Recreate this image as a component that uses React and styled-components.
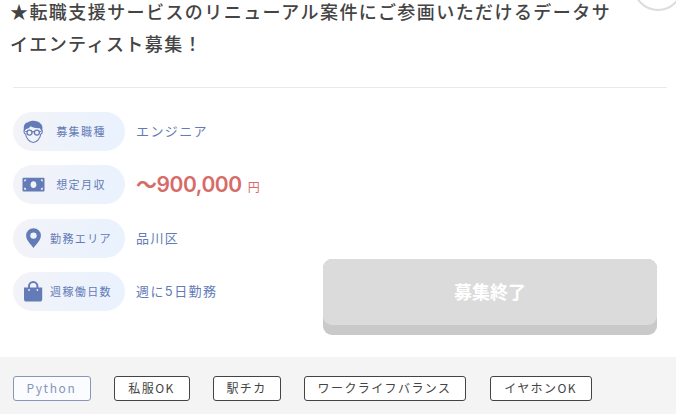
import React from "react";
import styled, { createGlobalStyle } from "styled-components";

const GlobalStyle = createGlobalStyle`
  * {
    box-sizing: border-box;
  }

  body {
    margin: 0;
    background-color: #fff;
    color: #444;
    font-family: "Noto Sans CJK JP", sans-serif;
    overflow: hidden;
  }
`;

// Job card, cut off at the bottom of the viewport
const Card = styled.article`
  position: relative;
  display: flex;
  flex-direction: column;
  width: 676px;
  height: 414px;
  overflow: hidden;
`;

// Round keep button that hangs over the top right corner
const KeepButton = styled.button`
  position: absolute;
  top: -39px;
  right: -7px;
  width: 50px;
  height: 50px;
  padding: 0;
  border: 2px solid #dcdcdc;
  border-radius: 50%;
  background-color: #fff;
`;

const Header = styled.header`
  height: 88px;
  margin: 0 9px 0 13px;
  border-bottom: 1px solid #e8e8e8;
`;

const Title = styled.h2`
  width: 612px;
  margin: -5px 0 0 -3px;
  font-size: 18px;
  font-weight: 500;
  line-height: 32px;
  letter-spacing: 1.43px;
`;

const Body = styled.div`
  display: flex;
  justify-content: space-between;
  align-items: flex-end;
  height: 269px;
  padding: 24px 19px 22px 13px;
`;

const Details = styled.dl`
  display: grid;
  grid-template-rows: repeat(4, 39px);
  row-gap: 14.4px;
  align-self: flex-start;
  margin: 0;
`;

const DetailRow = styled.div`
  display: flex;
  align-items: center;
`;

const Label = styled.dt`
  display: flex;
  align-items: center;
  width: 112px;
  height: 39px;
  padding: 0 10px 0 8px;
  border-radius: 20px;
  background: linear-gradient(100deg, #f3f3f8, #e9f2fe);
  color: #637bb7;
  font-size: 11px;
  letter-spacing: 1.4px;

  svg {
    flex: none;
    width: 24px;
    height: 24px;
  }

  span {
    flex: 1;
    display: flex;
    justify-content: center;
    padding: 0 0 1px 2px;
    white-space: nowrap;
  }
`;

const Value = styled.dd`
  margin: 0 0 1px 11px;
  color: #637bb7;
  font-size: 13px;
  line-height: 20px;
  letter-spacing: 1.4px;

  b {
    font-family: Inter, sans-serif;
    font-weight: 400;
  }
`;

const Price = styled.dd`
  display: flex;
  align-items: baseline;
  margin: 4px 0 0 11px;
  color: #d76b67;
  font-family: Inter, "Noto Sans CJK JP", sans-serif;
  font-size: 21px;
  font-weight: 600;
  line-height: 28px;
  letter-spacing: -0.45px;

  small {
    margin-left: 6px;
    font-size: 12px;
    font-weight: 400;
  }
`;

const ClosedButton = styled.button`
  width: 334px;
  height: 76px;
  padding: 0;
  border: 0;
  border-bottom: 10px solid #c9c9c9;
  border-radius: 9px;
  background-color: #c9c9c9;
  font: inherit;

  span {
    display: flex;
    align-items: center;
    justify-content: center;
    height: 66px;
    padding-bottom: 2px;
    border-radius: 9px;
    background-color: #dbdbdb;
    color: #fff;
    font-size: 18px;
    font-weight: 700;
  }
`;

const Tags = styled.ul`
  display: flex;
  flex: 1;
  align-items: flex-start;
  gap: 23px;
  margin: 0;
  padding: 19px 13px 0;
  background-color: #f4f4f4;
  list-style: none;
`;

const Tag = styled.li`
  flex: none;
  width: ${(props) => props.$width}px;
  height: 25px;
  padding-right: 1px;
  border: 1px solid ${(props) => (props.$skill ? "#8796b9" : "#444")};
  border-radius: 3px;
  background-color: ${(props) => (props.$skill ? "#fafcff" : "#fff")};
  color: ${(props) => (props.$skill ? "#8796b9" : "#444")};
  font-size: 12px;
  line-height: 21px;
  letter-spacing: ${(props) => (props.$skill ? 1.6 : 1.4)}px;
  text-align: center;
  white-space: nowrap;

  &:last-child {
    margin-left: 1px;
  }
`;

const PersonIcon = () => (
  <svg viewBox="0 0 24 24" fill="none" stroke="currentColor" aria-hidden="true">
    <path
      d="M3.2 11.5C1.800 6 3.600 2.600 7.200 2.200 10-.2 16.900.3 19.500 3.400c2.400 1.900 2.200 5.400 1.300 8.100l-1.900-3.300c-3.800.2-7.200-.5-9.400-1.900-.9 1.700-2.700 2.500-4.500 2.700z"
      fill="currentColor"
      stroke="none"
    />
    <path
      d="M4 9.500c-1.700.3-1.200 4.200.6 4.500.4 4.200 4.200 8.500 7.600 8.500s7.200-4.300 7.600-8.500c1.800-.3 2.100-4.200.4-4.500"
      strokeWidth="1.1"
    />
    <circle cx="8.5" cy="12.6" r="2.5" strokeWidth="1.3" />
    <circle cx="15.9" cy="12.6" r="2.5" strokeWidth="1.3" />
    <path d="M4.3 11.5h2M11 12.1q1.200-.8 2.400 0M18.100 11.500h2" strokeWidth="1.2" />
  </svg>
);

const BillIcon = () => (
  <svg viewBox="0 0 24 24" fill="currentColor" aria-hidden="true">
    <path
      fillRule="evenodd"
      d="M2.500 4.800h20q1 0 1 1v11.600q0 1-1 1h-20q-1 0-1-1V5.800q0-1 1-1zm.7 1.700v2.100A2.100 2.100 0 0 0 5.300 6.500zm0 10.200h2.100a2.100 2.100 0 0 0-2.100-2.100zM21.800 6.500h-2.100a2.100 2.100 0 0 0 2.100 2.100zm0 10.200v-2.100a2.100 2.100 0 0 0-2.100 2.100zM12.500 8.200c-3.900 0-3.900 6.900 0 6.900s3.900-6.900 0-6.900z"
    />
  </svg>
);

const PinIcon = () => (
  <svg viewBox="0 0 24 24" fill="currentColor" aria-hidden="true">
    <path
      fillRule="evenodd"
      d="M12.500 2.200A7.400 7.400 0 0 0 5.100 9.500c0 4.800 4.600 8.700 7.400 12.500 2.800-3.800 7.400-7.700 7.400-12.500a7.400 7.400 0 0 0-7.400-7.300zm0 4.200a3.200 3.200 0 1 1 0 6.400 3.200 3.200 0 0 1 0-6.400z"
    />
  </svg>
);

const BagIcon = () => (
  <svg viewBox="0 0 24 24" aria-hidden="true">
    <path d="M3 7.600h18.200v11.300q0 2.600-2.600 2.600H5.600Q3 21.500 3 18.900z" fill="currentColor" />
    <path d="M8 9V6.100a4.200 4.200 0 0 1 8.400 0V9" fill="none" stroke="currentColor" strokeWidth="2" />
    <circle cx="8" cy="10" r="0.9" fill="#eff2fa" />
    <circle cx="16.4" cy="10" r="0.9" fill="#eff2fa" />
  </svg>
);

const tags = [
  { name: "Python", width: 78, skill: true },
  { name: "私服OK", width: 76 },
  { name: "駅チカ", width: 68 },
  { name: "ワークライフバランス", width: 162 },
  { name: "イヤホンOK", width: 102 },
];

const App = () => {
  return (
    <>
      <GlobalStyle />
      <Card>
        <Header>
          <Title>
            ★転職支援サービスのリニューアル案件にご参画いただけるデータサイエンティスト募集！
          </Title>
        </Header>
        <KeepButton aria-label="キープ" />
        <Body>
          <Details>
            <DetailRow>
              <Label>
                <PersonIcon />
                <span>募集職種</span>
              </Label>
              <Value>エンジニア</Value>
            </DetailRow>
            <DetailRow>
              <Label>
                <BillIcon />
                <span>想定月収</span>
              </Label>
              <Price>
                〜900,000<small>円</small>
              </Price>
            </DetailRow>
            <DetailRow>
              <Label>
                <PinIcon />
                <span>勤務エリア</span>
              </Label>
              <Value>品川区</Value>
            </DetailRow>
            <DetailRow>
              <Label>
                <BagIcon />
                <span>週稼働日数</span>
              </Label>
              <Value>
                週に<b>5</b>日勤務
              </Value>
            </DetailRow>
          </Details>
          <ClosedButton>
            <span>募集終了</span>
          </ClosedButton>
        </Body>
        <Tags>
          {tags.map((tag) => (
            <Tag key={tag.name} $width={tag.width} $skill={tag.skill}>
              {tag.name}
            </Tag>
          ))}
        </Tags>
      </Card>
    </>
  );
};

export default App;
